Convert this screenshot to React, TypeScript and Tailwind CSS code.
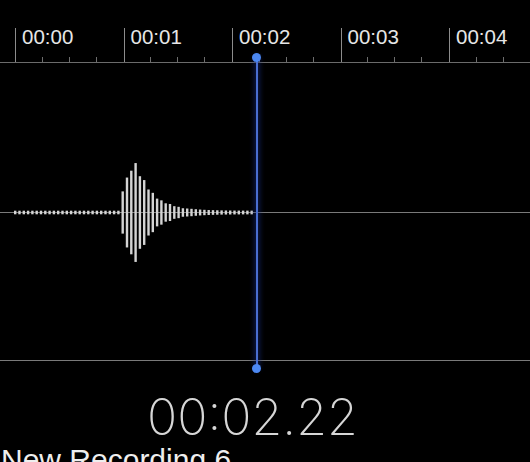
import React from 'react';

// Ruler labels, one per second
const seconds = ['00:00', '00:01', '00:02', '00:03', '00:04'];

// Build waveform bars: flat noise floor, then a short burst that decays
function buildBars() {
  const bars: { x: number; a: number }[] = [];
  const jitter = [1, 0.9, 0.97, 0.86, 0.94, 0.88];
  let i = 0;
  for (let x = 14; x <= 254; x += 4.3) {
    let a = 1.8;
    if (x >= 121 && x <= 134) {
      a = 22 + 38 * ((x - 121) / 13);
    } else if (x > 134) {
      a = 1.8 + 52 * Math.exp(-(x - 134) / 17);
    }
    if (a > 4) a = a * jitter[i % jitter.length];
    bars.push({ x, a: Math.max(a, 1.8) });
    i++;
  }
  return bars;
}

function Waveform() {
  const bars = buildBars();
  return (
    <svg width="530" height="298" className="block">
      <line x1="0" y1="149.5" x2="530" y2="149.5" stroke="#7a7a7a" strokeWidth="1" />
      {bars.map((b, idx) => (
        <rect
          key={idx}
          x={b.x}
          y={149.5 - b.a}
          width="2.4"
          height={b.a * 2}
          fill="#d4d4d4"
        />
      ))}
    </svg>
  );
}

function RulerSegment({ label }: { label: string }) {
  return (
    <div className="w-[108.5px] shrink-0 h-[34px] border-l border-[#8c8c8c] flex flex-col justify-between">
      <span className="pl-[6px] text-[20.5px] leading-[20px] text-[#e6e6e6] -mt-[1px]">{label}</span>
      <div className="grid grid-cols-4 h-[5px]">
        <div className="border-r border-[#6e6e6e]" />
        <div className="border-r border-[#6e6e6e]" />
        <div className="border-r border-[#6e6e6e]" />
        <div />
      </div>
    </div>
  );
}

export default function App() {
  return (
    <div
      className="relative w-[530px] h-[462px] overflow-hidden bg-black text-white"
      style={{ fontFamily: '"Liberation Sans", Arial, sans-serif' }}
    >
      {/* time ruler */}
      <div className="h-[63px] pt-[28px] border-b border-[#6b6b6b] flex pl-[15px]">
        {seconds.map((s) => (
          <RulerSegment key={s} label={s} />
        ))}
      </div>

      {/* waveform */}
      <div className="h-[298px] border-b border-[#7a7a7a]">
        <Waveform />
      </div>

      {/* current time */}
      <div className="flex justify-center pr-[25px] pt-[31px]">
        <span
          className="text-[50px] leading-none font-extralight text-[#d6d6d6]"
          style={{ fontFamily: 'Inter, "Liberation Sans", sans-serif' }}
        >
          00:02.22
        </span>
      </div>

      <div className="mt-[3px] pl-[1px] text-[30px] leading-none text-[#eeeeee] whitespace-nowrap">New Recording 6</div>

      {/* playhead */}
      <div className="absolute left-[255.5px] top-[57px] h-[311px] w-[2px] bg-[#4a6fd2] shadow-[0_0_5px_2px_rgba(25,45,130,0.55)]" />
      <div className="absolute left-[252px] top-[52.5px] w-[9px] h-[9px] rounded-full bg-[#4c88f2]" />
      <div className="absolute left-[252px] top-[363.5px] w-[9px] h-[9px] rounded-full bg-[#4c88f2]" />
    </div>
  );
}
